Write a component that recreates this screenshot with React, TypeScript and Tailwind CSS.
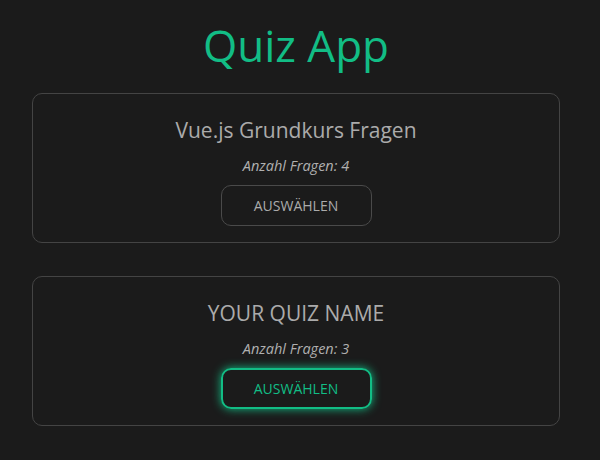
const quizzes = [
  { name: "Vue.js Grundkurs Fragen", count: 4, active: false },
  { name: "YOUR QUIZ NAME", count: 3, active: true },
];

const App = () => {
  return (
    <div className="min-h-[460px] bg-[#1b1b1b] pl-8 pr-[40px] pt-[14px] pb-8 font-['Open_Sans',sans-serif]">
      <h1 className="text-center text-[44px] leading-[62px] text-[#12bd85]">Quiz App</h1>
      <div className="mt-[17px] flex flex-col gap-[33px]">
        {quizzes.map((q) => (
          <div
            key={q.name}
            className="flex flex-col items-center rounded-[10px] border border-[#444] px-4 pt-[22px] pb-4"
          >
            <h2 className="text-[21px] leading-[28px] text-[#ababab]">{q.name}</h2>
            <p className="mt-3 text-[14.5px] italic leading-[20px] text-[#b0b0b0]">
              Anzahl Fragen: {q.count}
            </p>
            <button
              className={`mt-[9px] h-[41px] w-[151px] rounded-[10px] text-[14px] uppercase ${
                q.active
                  ? "border-2 border-[#12bd85] text-[#12bd85] shadow-[0_0_10px_#12bd85]"
                  : "border border-[#4a4a4a] text-[#ababab]"
              }`}
            >
              Auswählen
            </button>
          </div>
        ))}
      </div>
    </div>
  );
};

export default App;
